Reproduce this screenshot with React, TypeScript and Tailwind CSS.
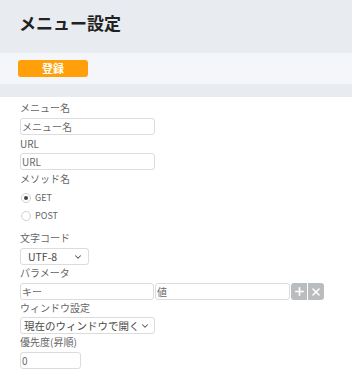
import React from "react";
import { ChevronDown, Plus, X } from "lucide-react";

function Label({ children, className = "" }: { children: React.ReactNode; className?: string }) {
  return (
    <div className={`whitespace-nowrap text-[10px] leading-[16px] text-[#666] ${className}`}>{children}</div>
  );
}

function TextBox({ placeholder, w, className = "" }: { placeholder: string; w: string; className?: string }) {
  return (
    <div
      className={`h-[17px] ${w} whitespace-nowrap rounded-[3px] border border-[#dcdcdc] bg-white px-[1px] text-[10px] leading-[15px] text-[#6a6a6a] ${className}`}
    >
      {placeholder}
    </div>
  );
}

function Radio({ label, checked }: { label: string; checked?: boolean }) {
  return (
    <div className="flex h-[18px] items-center gap-[4px] pl-[1px]">
      <div className="flex h-[10px] w-[10px] items-center justify-center rounded-full border border-[#d0d0d0] bg-white">
        {checked && <div className="h-[4px] w-[4px] rounded-full bg-[#444]" />}
      </div>
      <span className="text-[9px] leading-[10px] text-[#666]">{label}</span>
    </div>
  );
}

function SelectBox({ value, w, pl }: { value: string; w: string; pl: string }) {
  return (
    <div
      className={`flex h-[17px] ${w} items-center justify-between whitespace-nowrap rounded-[3px] border border-[#dcdcdc] bg-white ${pl} pr-[5px] text-[10.5px] leading-[15px] text-[#4a4a4a]`}
    >
      <span>{value}</span>
      <ChevronDown size={10} strokeWidth={2.5} color="#555" className="shrink-0" />
    </div>
  );
}

export default function App() {
  return (
    <div className="h-[379px] w-[352px] overflow-hidden bg-white font-[family-name:'Noto_Sans_CJK_JP',sans-serif]">
      <div className="h-[53px] bg-[#e8ebf0] pl-[19px] pt-[11px]">
        <div className="text-[17px] font-bold leading-[24px] text-[#222]">メニュー設定</div>
      </div>
      <div className="h-[31px] bg-[#f4f6f9] pl-[18px] pt-[7px]">
        <div className="flex h-[17px] w-[70px] items-center justify-center rounded-[3px] bg-[#ffa00a] text-[11px] font-bold leading-[17px] text-white">
          登録
        </div>
      </div>
      <div className="h-[13px] bg-[#e8ebf0]" />
      <div className="flex flex-col px-[20px]">
        <Label className="mt-[3px]">メニュー名</Label>
        <TextBox placeholder="メニュー名" w="w-[135px]" className="mt-[2px]" />
        <Label className="mt-[1px]">URL</Label>
        <TextBox placeholder="URL" w="w-[135px]" className="mt-[1px]" />
        <Label className="mt-[1px]">メソッド名</Label>
        <div className="mt-[2px] flex flex-col">
          <Radio label="GET" checked />
          <Radio label="POST" />
        </div>
        <Label className="mt-[5px]">文字コード</Label>
        <div className="mt-[2px]">
          <SelectBox value="UTF-8" w="w-[69px]" pl="pl-[7px]" />
        </div>
        <Label>パラメータ</Label>
        <div className="mt-[2px] flex items-center">
          <TextBox placeholder="キー" w="w-[134px]" />
          <TextBox placeholder="値" w="w-[135px]" className="ml-[1px]" />
          <div className="ml-[1px] flex h-[17px] w-[16px] items-center justify-center rounded-l-[3px] bg-[#babdc0]">
            <Plus size={13} strokeWidth={3} color="#fff" />
          </div>
          <div className="ml-[1px] flex h-[17px] w-[16px] items-center justify-center rounded-r-[3px] bg-[#babdc0]">
            <X size={12} strokeWidth={3} color="#fff" />
          </div>
        </div>
        <Label>ウィンドウ設定</Label>
        <div className="mt-[1px]">
          <SelectBox value="現在のウィンドウで開く" w="w-[135px]" pl="pl-[3px]" />
        </div>
        <Label>優先度(昇順)</Label>
        <TextBox placeholder="0" w="w-[61px]" className="mt-[2px]" />
      </div>
    </div>
  );
}
